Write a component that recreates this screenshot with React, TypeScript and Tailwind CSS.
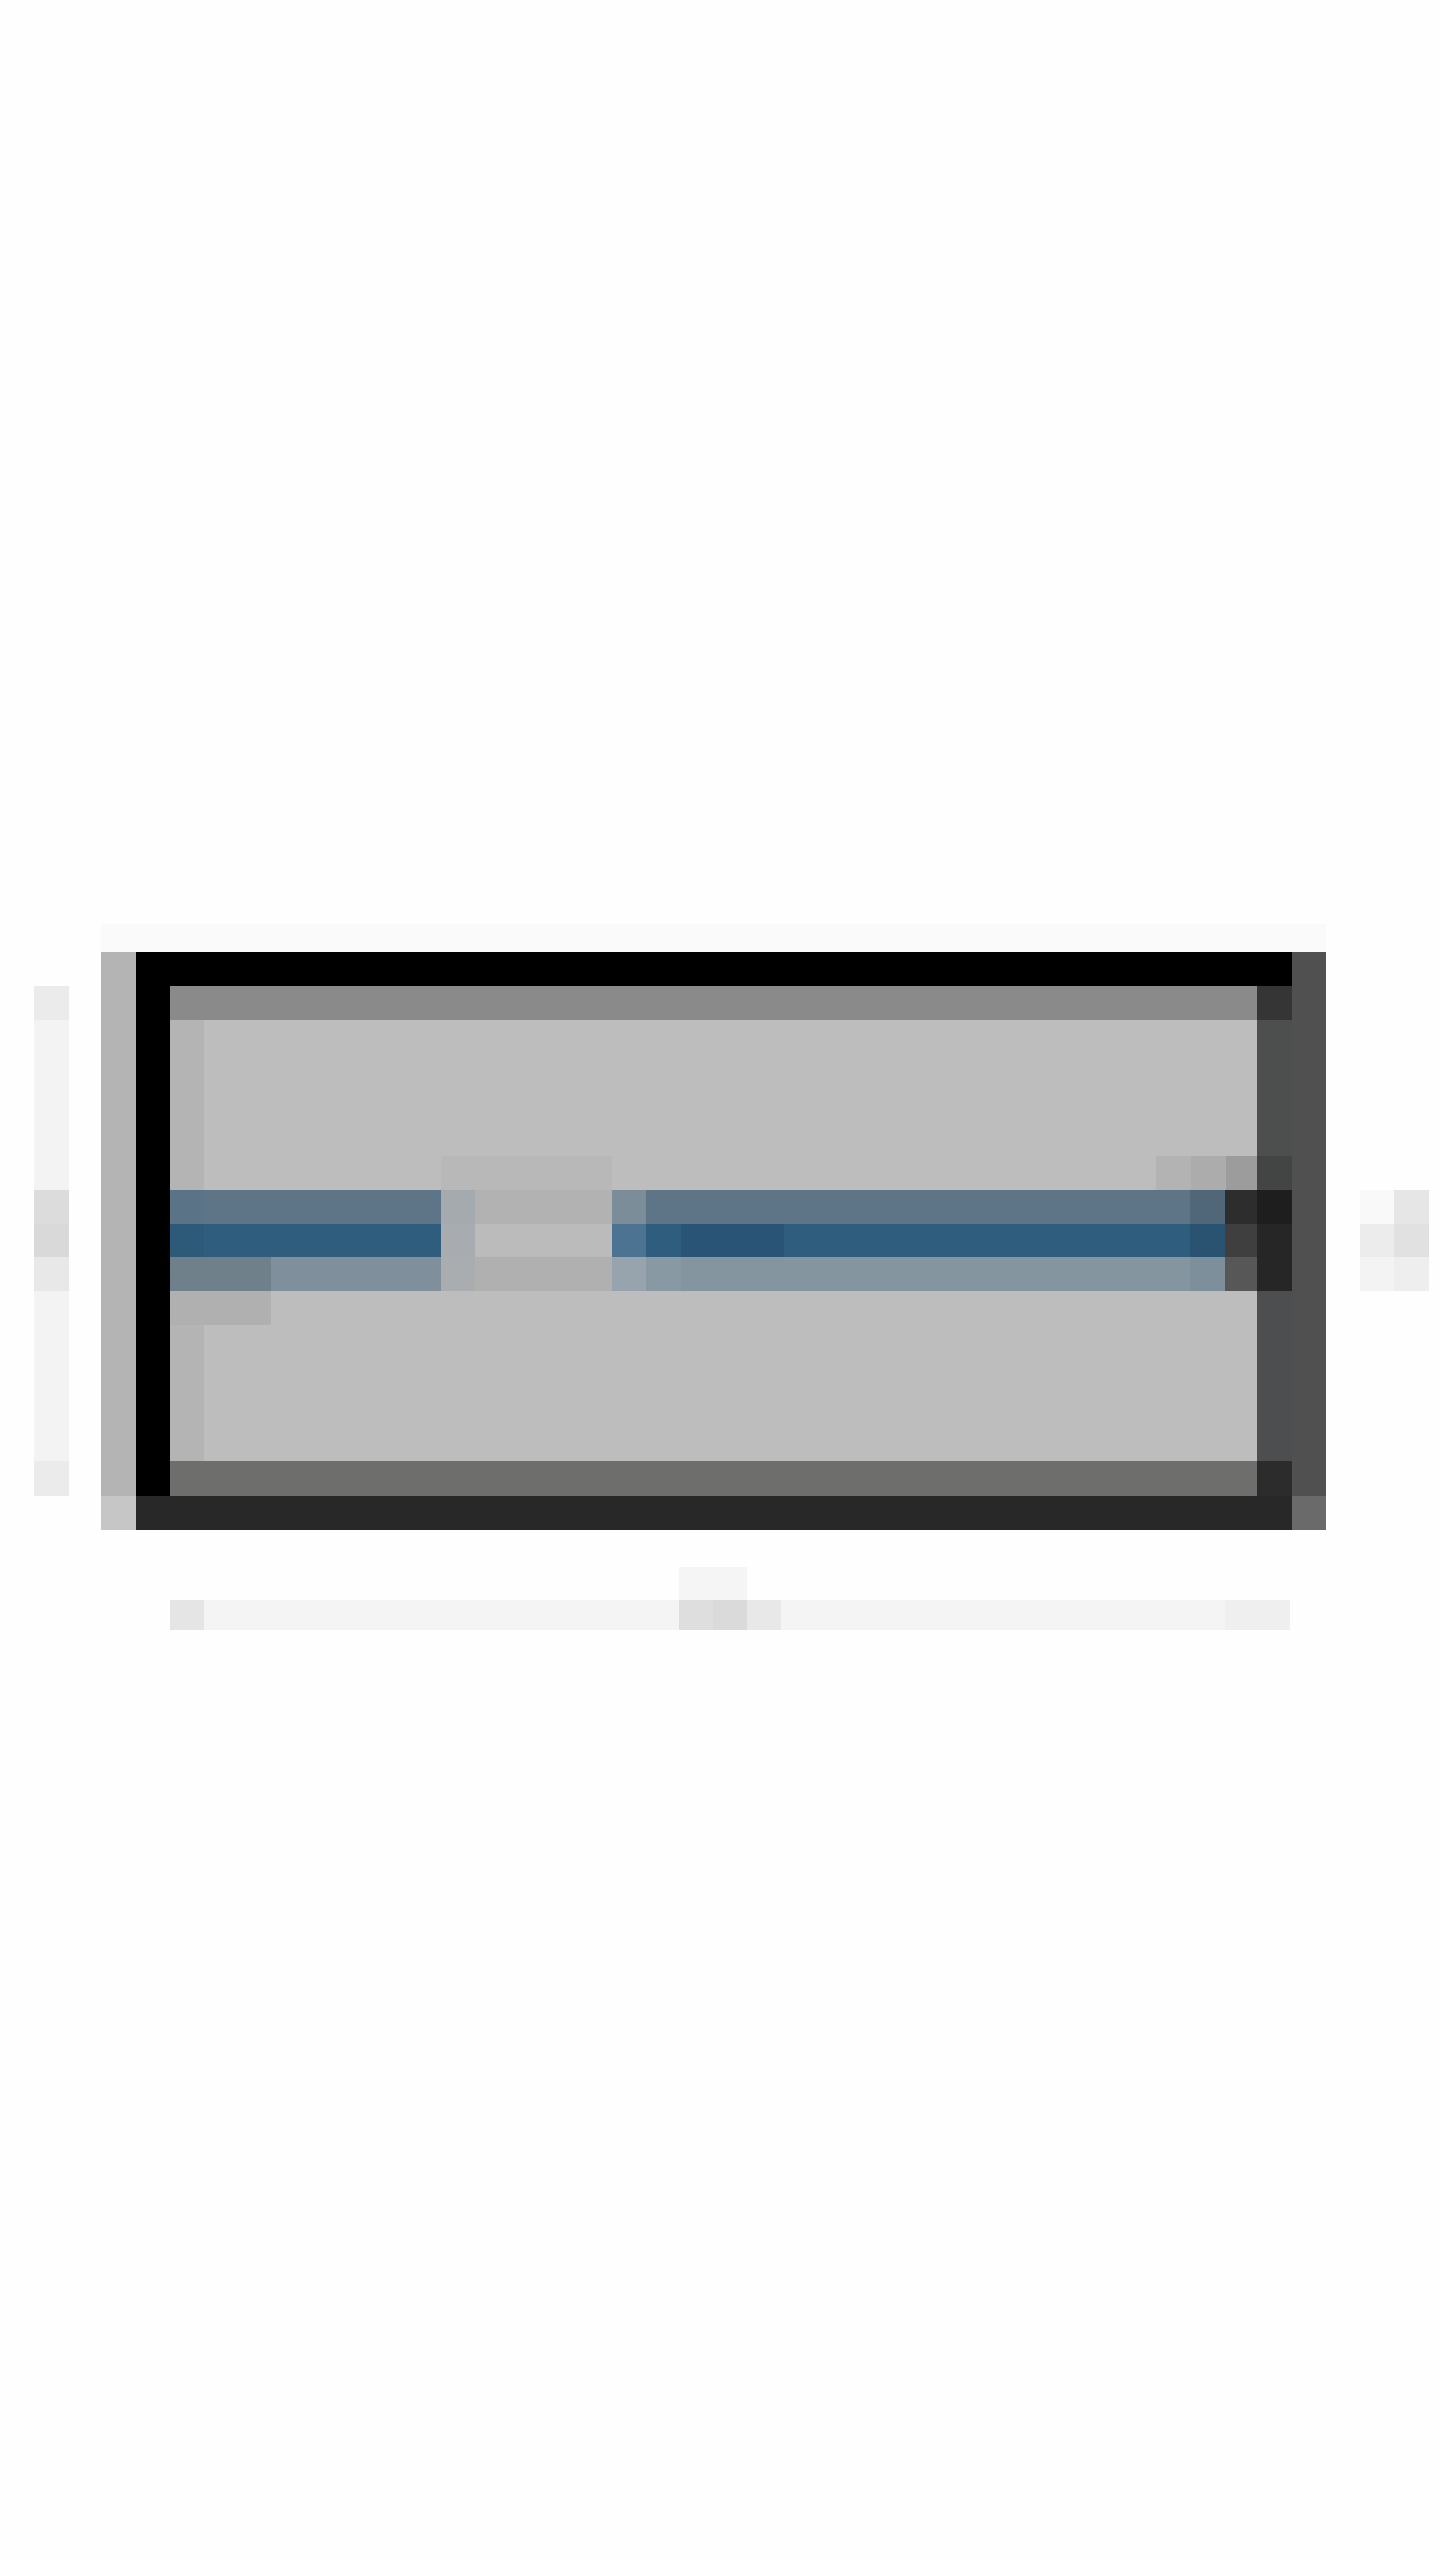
import React from "react";

type Seg = { w: number; c: string };

// one horizontal strip of flat colour blocks
function Strip({ segs, h }: { segs: Seg[]; h: string }) {
  return (
    <div className={`flex ${h}`}>
      {segs.map((s, i) => (
        <div key={i} style={{ width: s.w, backgroundColor: s.c }} />
      ))}
    </div>
  );
}

const blueRows: Seg[][] = [
  [
    { w: 34, c: "#5b7386" },
    { w: 67, c: "#5e7588" },
    { w: 170, c: "#5e7588" },
    { w: 34, c: "#a5aaaf" },
    { w: 137, c: "#b2b2b2" },
    { w: 34, c: "#7c8d9a" },
    { w: 35, c: "#5e7588" },
    { w: 103, c: "#5e7588" },
    { w: 406, c: "#5e7588" },
    { w: 35, c: "#4f6778" },
    { w: 32, c: "#2d2d2d" },
  ],
  [
    { w: 34, c: "#2e5a7a" },
    { w: 67, c: "#2e5d7e" },
    { w: 170, c: "#2e5d7e" },
    { w: 34, c: "#a8abaf" },
    { w: 137, c: "#bbbbbb" },
    { w: 34, c: "#4c7391" },
    { w: 35, c: "#2e5d7e" },
    { w: 103, c: "#2a5475" },
    { w: 406, c: "#2e5d7e" },
    { w: 35, c: "#2a5371" },
    { w: 32, c: "#3f3f3f" },
  ],
  [
    { w: 34, c: "#6f808b" },
    { w: 67, c: "#6f808b" },
    { w: 170, c: "#7f909c" },
    { w: 34, c: "#a9adb0" },
    { w: 137, c: "#b0b0b0" },
    { w: 34, c: "#97a4ad" },
    { w: 35, c: "#8899a4" },
    { w: 103, c: "#8595a0" },
    { w: 406, c: "#8495a0" },
    { w: 35, c: "#7e8f9c" },
    { w: 32, c: "#575757" },
  ],
];

function Inner() {
  return (
    <div className="flex w-[1087px] flex-col">
      <div className="h-[34px] bg-[#8a8a8a]" />
      <div className="flex h-[136px]">
        <div className="w-[34px] bg-[#b4b4b4]" />
        <div className="flex-1 bg-[#bdbdbd]" />
      </div>
      <Strip
        h="h-[34px]"
        segs={[
          { w: 34, c: "#b4b4b4" },
          { w: 237, c: "#bdbdbd" },
          { w: 171, c: "#b8b8b8" },
          { w: 544, c: "#bdbdbd" },
          { w: 35, c: "#b3b3b3" },
          { w: 35, c: "#acacac" },
          { w: 31, c: "#9c9c9c" },
        ]}
      />
      {blueRows.map((r, i) => (
        <Strip key={i} segs={r} h={i === 1 ? "h-[33px]" : "h-[34px]"} />
      ))}
      <Strip
        h="h-[34px]"
        segs={[
          { w: 101, c: "#b0b0b0" },
          { w: 986, c: "#bdbdbd" },
        ]}
      />
      <div className="flex h-[136px]">
        <div className="w-[34px] bg-[#b4b4b4]" />
        <div className="flex-1 bg-[#bdbdbd]" />
      </div>
      <div className="h-[35px] bg-[#6e6e6c]" />
    </div>
  );
}

function Frame() {
  return (
    <div className="flex w-[1156px] flex-col">
      <div className="h-[34px] bg-black" />
      <div className="flex h-[510px]">
        <div className="w-[34px] bg-black" />
        <Inner />
        <div className="flex w-[35px] flex-col">
          <div className="h-[34px] bg-[#353535]" />
          <div className="h-[136px] bg-[#4d4f4f]" />
          <div className="h-[34px] bg-[#434545]" />
          <div className="h-[34px] bg-[#1e1e1e]" />
          <div className="h-[67px] bg-[#262626]" />
          <div className="h-[170px] bg-[#4c4e4f]" />
          <div className="h-[35px] bg-[#2c2c2c]" />
        </div>
      </div>
      <div className="h-[34px] bg-[#282828]" />
    </div>
  );
}

export default function App() {
  return (
    <div className="flex h-[2560px] w-[1440px] flex-col bg-[#fefefe] pt-[924px]">
      <div className="ml-[101px] h-[28px] w-[1225px] bg-[#fafafa]" />
      <div className="flex h-[578px]">
        <div className="ml-[34px] mt-[34px] flex h-[510px] w-[35px] flex-col">
          <div className="h-[34px] bg-[#ebebeb]" />
          <div className="h-[170px] bg-[#f3f3f3]" />
          <div className="h-[34px] bg-[#dcdcdc]" />
          <div className="h-[33px] bg-[#d9d9d9]" />
          <div className="h-[34px] bg-[#e8e8e8]" />
          <div className="h-[170px] bg-[#f3f3f3]" />
          <div className="h-[35px] bg-[#ebebeb]" />
        </div>
        <div className="w-[32px]" />
        <div className="flex w-[35px] flex-col">
          <div className="h-[544px] bg-[#b4b4b4]" />
          <div className="h-[34px] bg-[#c6c6c6]" />
        </div>
        <Frame />
        <div className="flex w-[34px] flex-col">
          <div className="h-[544px] bg-[#505050]" />
          <div className="h-[34px] bg-[#6a6a6a]" />
        </div>
        <div className="ml-[34px] mt-[238px] grid h-[101px] w-[69px] grid-cols-[34px_35px] grid-rows-[34px_33px_34px]">
          <div className="bg-[#f9f9f9]" />
          <div className="bg-[#e6e6e6]" />
          <div className="bg-[#ececec]" />
          <div className="bg-[#e1e1e1]" />
          <div className="bg-[#f3f3f3]" />
          <div className="bg-[#eeeeee]" />
        </div>
      </div>
      <div className="ml-[679px] mt-[37px] h-[33px] w-[68px] bg-[#f5f5f5]" />
      <div className="ml-[170px] h-[30px]">
        <Strip
          h="h-[30px]"
          segs={[
            { w: 34, c: "#e5e5e5" },
            { w: 475, c: "#f4f4f4" },
            { w: 34, c: "#dedede" },
            { w: 34, c: "#dadada" },
            { w: 34, c: "#e8e8e8" },
            { w: 444, c: "#f4f4f4" },
            { w: 65, c: "#efefef" },
          ]}
        />
      </div>
    </div>
  );
}
